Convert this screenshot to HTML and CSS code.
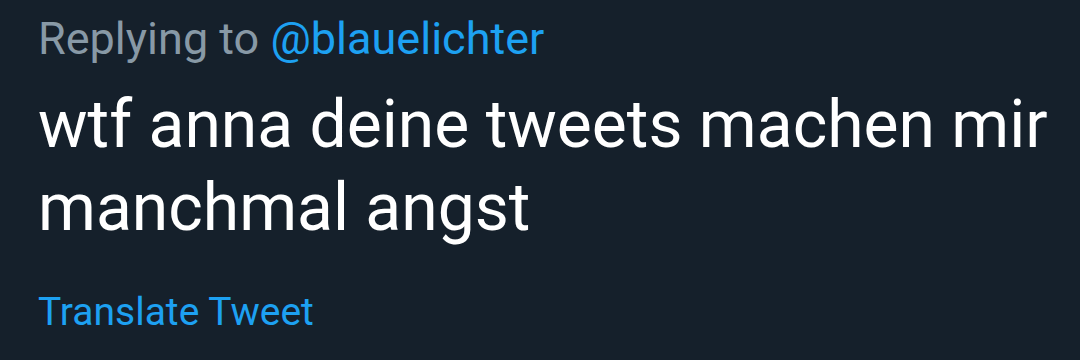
FILE: index.html
```html
<!DOCTYPE html>
<html lang="en">
<head>
  <meta charset="UTF-8">
  <title>Tweet</title>
  <link rel="stylesheet" href="styles.css">
</head>
<body>
  <div class="tweet">
    <p class="reply-to">Replying to <a class="mention" href="#">@blauelichter</a></p>
    <p class="tweet-text">wtf anna deine tweets machen mir manchmal angst</p>
    <a class="translate" href="#">Translate Tweet</a>
  </div>
</body>
</html>
```

FILE: styles.css
```css
body {
  margin: 0;
  padding: 0;
  background: #15202b;
  font-family: Roboto, "Noto Sans", sans-serif;
  width: 1080px;
  height: 360px;
  overflow: hidden;
}
.tweet {
  padding: 12px 10px 0 38px;
}
.reply-to {
  margin: 0;
  font-size: 45px;
  line-height: 54px;
  color: #8899a6;
}
.mention {
  color: #1da1f2;
  text-decoration: none;
}
.tweet-text {
  margin: 17px 0 0 0;
  font-size: 66px;
  line-height: 83px;
  color: #ffffff;
}
.translate {
  display: block;
  margin-top: 39px;
  font-size: 39px;
  line-height: 48px;
  color: #1da1f2;
  text-decoration: none;
}
```
